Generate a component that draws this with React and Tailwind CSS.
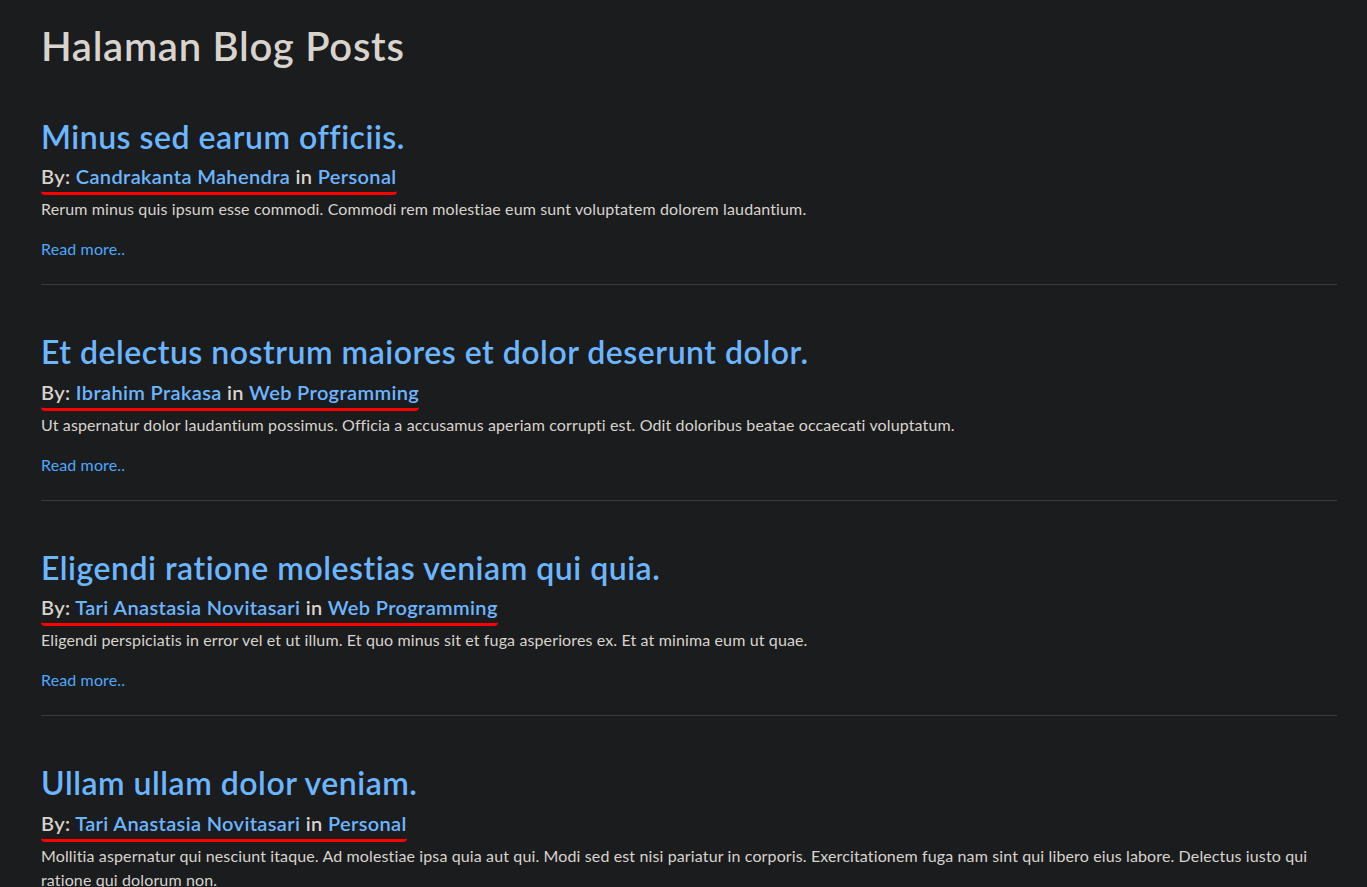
import React from 'react';

const posts = [
  {
    title: 'Minus sed earum officiis.',
    author: 'Candrakanta Mahendra',
    category: 'Personal',
    excerpt: 'Rerum minus quis ipsum esse commodi. Commodi rem molestiae eum sunt voluptatem dolorem laudantium.',
  },
  {
    title: 'Et delectus nostrum maiores et dolor deserunt dolor.',
    author: 'Ibrahim Prakasa',
    category: 'Web Programming',
    excerpt: 'Ut aspernatur dolor laudantium possimus. Officia a accusamus aperiam corrupti est. Odit doloribus beatae occaecati voluptatum.',
  },
  {
    title: 'Eligendi ratione molestias veniam qui quia.',
    author: 'Tari Anastasia Novitasari',
    category: 'Web Programming',
    excerpt: 'Eligendi perspiciatis in error vel et ut illum. Et quo minus sit et fuga asperiores ex. Et at minima eum ut quae.',
  },
  {
    title: 'Ullam ullam dolor veniam.',
    author: 'Tari Anastasia Novitasari',
    category: 'Personal',
    excerpt: 'Mollitia aspernatur qui nesciunt itaque. Ad molestiae ipsa quia aut qui. Modi sed est nisi pariatur in corporis. Exercitationem fuga nam sint qui libero eius labore. Delectus iusto qui ratione qui dolorum non.',
  },
];

export default function App() {
  return (
    <div className="min-h-screen bg-[#1b1c1e] text-[#d8d4cd] font-['Lato',sans-serif] tracking-[0.008em]">
      <div className="pl-[41px] pr-[30px] pt-[22px] pb-10">
        <h1 className="text-[40px] leading-[48px] font-semibold tracking-[0.018em] mb-[48px]">Halaman Blog Posts</h1>

        {posts.map((post, i) => (
          <article key={i}>
            <h2 className="text-[32px] leading-[38.4px] font-semibold tracking-[0.016em] mb-2">
              <a href="#" className="text-[#6cb6ff]">{post.title}</a>
            </h2>
            {/* info penulis & kategori */}
            <h5 className="w-fit text-[20px] leading-6 font-semibold tracking-[0.018em] pb-[4px] border-b-[3px] border-[#ff0000] rounded-sm">
              By: <a href="#" className="text-[#6cb6ff]">{post.author}</a> in{' '}
              <a href="#" className="text-[#6cb6ff]">{post.category}</a>
            </h5>
            <p className="text-base leading-6 mt-[2px] mb-4">{post.excerpt}</p>
            <p className="text-base leading-6">
              <a href="#" className="text-[#4ea8ff]">Read more..</a>
            </p>
            {i < posts.length - 1 && (
              <hr className="border-0 border-t border-[#3a3d40] mt-[23px] mb-[48px]" />
            )}
          </article>
        ))}
      </div>
    </div>
  );
}
